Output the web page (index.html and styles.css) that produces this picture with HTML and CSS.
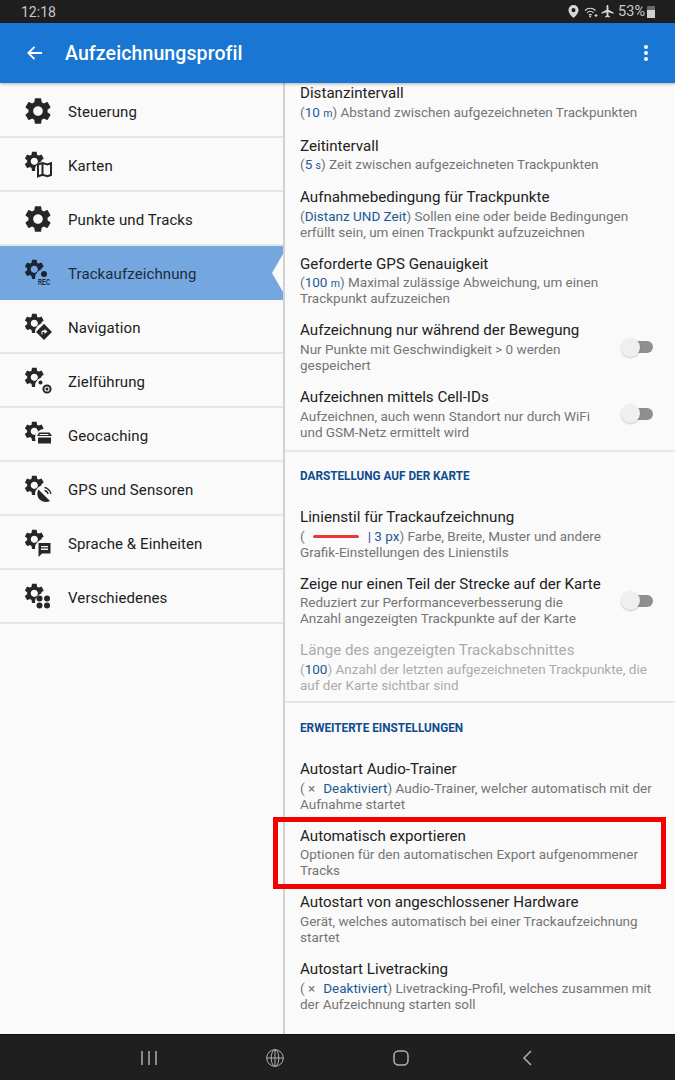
FILE: index.html
```html
<!DOCTYPE html>
<html lang="de">
<head>
  <meta charset="UTF-8" />
  <title>Aufzeichnungsprofil</title>
  <link rel="stylesheet" href="styles.css">
</head>
<body>
  <svg class="defs" xmlns="http://www.w3.org/2000/svg">
    <symbol id="gear" viewBox="0 0 24 24">
      <path d="M19.14 12.94c.04-.3.06-.61.06-.94 0-.32-.02-.64-.07-.94l2.03-1.58c.18-.14.23-.41.12-.61l-1.92-3.32c-.12-.22-.37-.29-.59-.22l-2.39.96c-.5-.38-1.03-.7-1.62-.94l-.36-2.54c-.04-.24-.24-.41-.48-.41h-3.84c-.24 0-.43.17-.47.41l-.36 2.54c-.59.24-1.13.57-1.62.94l-2.39-.96c-.22-.08-.47 0-.59.22L2.74 8.87c-.12.21-.08.47.12.61l2.03 1.58c-.05.3-.09.63-.09.94s.02.64.07.94l-2.03 1.58c-.18.14-.23.41-.12.61l1.92 3.32c.12.22.37.29.59.22l2.39-.96c.5.38 1.03.7 1.62.94l.36 2.54c.05.24.24.41.48.41h3.84c.24 0 .44-.17.47-.41l.36-2.54c.59-.24 1.13-.56 1.62-.94l2.39.96c.22.08.47 0 .59-.22l1.92-3.32c.12-.22.07-.47-.12-.61l-2.01-1.58zM12 15.6c-1.98 0-3.6-1.62-3.6-3.6s1.62-3.6 3.6-3.6 3.6 1.62 3.6 3.6-1.62 3.6-3.6 3.6z"/>
    </symbol>
  </svg>

  <div class="page">
    <div class="status-bar">
      <span class="clock">12:18</span>
      <div class="status-icons">
        <svg class="st-pin" viewBox="0 0 12 14"><path d="M6 0a5.500 5.500 0 0 0-5.500 5.500C.5 9.200 6 14 6 14s5.500-4.800 5.500-8.500A5.500 5.500 0 0 0 6 0zm0 7.700a2.200 2.200 0 1 1 0-4.400 2.200 2.200 0 0 1 0 4.400z"/></svg>
        <svg class="st-wifi" viewBox="0 0 14 12"><path class="st-line" d="M1 4.500c3-3 7.500-3 10.500 0M3 6.800c2-2 4.500-2 6.500 0M5 9c1-.9 1.600-.9 2.500 0"/><circle cx="6.200" cy="10.600" r="1"/><path class="st-line" d="M10.500 9.500h3M12 8v3"/></svg>
        <svg class="st-plane" viewBox="0 0 14 14"><path d="M13.500 9.500V8.200L8 5V1.500C8 .7 7.500 0 7 0S6 .7 6 1.500V5L.5 8.200v1.300L6 7.800v3.500l-1.500 1.100V13.500L7 12.800l2.500.7v-1.100L8 11.300V7.800z"/></svg>
        <span class="battery-pct">53%</span>
        <div class="battery"><div class="battery-fill"></div></div>
      </div>
    </div>

    <header class="app-bar">
      <svg class="back-arrow" viewBox="0 0 16 16"><path d="M15.500 8H2M8 1.800 1.800 8 8 14.200"/></svg>
      <h1 class="app-title">Aufzeichnungsprofil</h1>
      <div class="more-dots"><i></i><i></i><i></i></div>
    </header>

    <div class="main">
      <nav class="side-list">
        <div class="side-row">
          <svg class="side-icon" viewBox="0 0 28 28"><use href="#gear" x="-2" y="-2" width="32" height="32"/></svg>
          <span>Steuerung</span>
        </div>
        <div class="side-row">
          <svg class="side-icon" viewBox="0 0 28 28">
            <use href="#gear" x="-1.700" y="-1.700" width="24" height="24"/>
            <circle class="cut" cx="20" cy="19" r="9"/>
            <path class="glyph-line" d="M14 13.500 18.500 12l5 1.500 3.500-1.300V24l-3.500 1.300-5-1.500-4.500 1.500z"/>
            <path class="glyph-fill" d="M17.500 12h2v12h-2z"/>
          </svg>
          <span>Karten</span>
        </div>
        <div class="side-row">
          <svg class="side-icon" viewBox="0 0 28 28"><use href="#gear" x="-2" y="-2" width="32" height="32"/></svg>
          <span>Punkte und Tracks</span>
        </div>
        <div class="side-row active">
          <svg class="side-icon" viewBox="0 0 28 28">
            <use href="#gear" x="-1.700" y="-1.700" width="24" height="24"/>
            <circle class="cut" cx="20" cy="19" r="9"/>
            <circle cx="20" cy="15" r="3"/>
            <text class="rec-label" x="14" y="26" textLength="12" lengthAdjust="spacingAndGlyphs">REC</text>
          </svg>
          <span>Trackaufzeichnung</span>
        </div>
        <div class="side-row">
          <svg class="side-icon" viewBox="0 0 28 28">
            <use href="#gear" x="-1.700" y="-1.700" width="24" height="24"/>
            <circle class="cut" cx="20" cy="19" r="9"/>
            <path d="M20 10.800 28 19l-8 8-8-8z"/>
            <path class="glyph-cut" d="M17.500 21.500v-3l1-1h2v-1.500l3 2.500-3 2.500V19h-2v2.500z"/>
          </svg>
          <span>Navigation</span>
        </div>
        <div class="side-row">
          <svg class="side-icon" viewBox="0 0 28 28">
            <use href="#gear" x="-1.700" y="-1.700" width="24" height="24"/>
            <circle class="cut" cx="20" cy="19" r="9"/>
            <circle cx="16.500" cy="15.500" r="2"/>
            <circle class="glyph-line" cx="23" cy="22" r="3.600"/>
            <circle cx="23" cy="22" r="1.500"/>
          </svg>
          <span>Zielführung</span>
        </div>
        <div class="side-row">
          <svg class="side-icon" viewBox="0 0 28 28">
            <use href="#gear" x="-1.700" y="-1.700" width="24" height="24"/>
            <circle class="cut" cx="20" cy="17" r="9"/>
            <path d="M15 11.500h10.500l2.500 3.500H13zM14 16.500h13v6H14z"/>
            <path class="glyph-cut" d="M16 13h8l1 1H15.200z"/>
          </svg>
          <span>Geocaching</span>
        </div>
        <div class="side-row">
          <svg class="side-icon" viewBox="0 0 28 28">
            <use href="#gear" x="-1.700" y="-1.700" width="24" height="24"/>
            <circle class="cut" cx="20" cy="19" r="9"/>
            <path d="M14.500 14.500 26 26c-3.300 1.700-7.700 1.200-10.300-1.500-2.700-2.700-3-7-1.200-10z"/>
            <path class="glyph-thin" d="M20.500 12.500c3 .3 6 3.300 6.500 6.500M20.500 15.500c1.700.3 3.200 1.800 3.500 3.500"/>
          </svg>
          <span>GPS und Sensoren</span>
        </div>
        <div class="side-row">
          <svg class="side-icon" viewBox="0 0 28 28">
            <use href="#gear" x="-1.700" y="-1.700" width="24" height="24"/>
            <circle class="cut" cx="20" cy="19" r="9"/>
            <path d="M14.500 14h12v10.500H18l-3.500 3.500z"/>
            <path class="glyph-cut" d="M17 17h7v1.300h-7zM17 19.600h7v1.300h-7z"/>
          </svg>
          <span>Sprache &amp; Einheiten</span>
        </div>
        <div class="side-row">
          <svg class="side-icon" viewBox="0 0 28 28">
            <use href="#gear" x="-1.700" y="-1.700" width="24" height="24"/>
            <circle class="cut" cx="20" cy="19" r="9"/>
            <circle cx="15.500" cy="15.500" r="3"/><circle cx="23" cy="15.500" r="3"/>
            <circle cx="15.500" cy="22.500" r="3"/><circle cx="23" cy="22.500" r="3"/>
          </svg>
          <span>Verschiedenes</span>
        </div>
      </nav>

      <section class="pref-pane">
        <div class="pref-group first">
          <div class="pref">
            <div class="pref-title">Distanzintervall</div>
            <div class="pref-sub">(<b>10 <small>m</small></b>) Abstand zwischen aufgezeichneten Trackpunkten</div>
          </div>
          <div class="pref">
            <div class="pref-title">Zeitintervall</div>
            <div class="pref-sub">(<b>5 <small>s</small></b>) Zeit zwischen aufgezeichneten Trackpunkten</div>
          </div>
          <div class="pref">
            <div class="pref-title">Aufnahmebedingung für Trackpunkte</div>
            <div class="pref-sub">(<b>Distanz UND Zeit</b>) Sollen eine oder beide Bedingungen erfüllt sein, um einen Trackpunkt aufzuzeichnen</div>
          </div>
          <div class="pref">
            <div class="pref-title">Geforderte GPS Genauigkeit</div>
            <div class="pref-sub">(<b>100 <small>m</small></b>) Maximal zulässige Abweichung, um einen Trackpunkt aufzuzeichen</div>
          </div>
          <div class="pref with-toggle">
            <div class="pref-text">
              <div class="pref-title">Aufzeichnung nur während der Bewegung</div>
              <div class="pref-sub">Nur Punkte mit Geschwindigkeit &gt; 0 werden gespeichert</div>
            </div>
            <div class="toggle"></div>
          </div>
          <div class="pref with-toggle">
            <div class="pref-text">
              <div class="pref-title">Aufzeichnen mittels Cell-IDs</div>
              <div class="pref-sub">Aufzeichnen, auch wenn Standort nur durch WiFi und GSM-Netz ermittelt wird</div>
            </div>
            <div class="toggle"></div>
          </div>
        </div>

        <div class="pref-group">
          <h2 class="group-head"><span>DARSTELLUNG AUF DER KARTE</span></h2>
          <div class="pref">
            <div class="pref-title">Linienstil für Trackaufzeichnung</div>
            <div class="pref-sub">(<span class="line-sample"></span><b>| 3 px</b>) Farbe, Breite, Muster und andere <span class="nobreak">Grafik-Einstellungen</span> des Linienstils</div>
          </div>
          <div class="pref with-toggle">
            <div class="pref-text">
              <div class="pref-title">Zeige nur einen Teil der Strecke auf der Karte</div>
              <div class="pref-sub">Reduziert zur Performanceverbesserung die Anzahl angezeigten Trackpunkte auf der Karte</div>
            </div>
            <div class="toggle"></div>
          </div>
          <div class="pref disabled">
            <div class="pref-title">Länge des angezeigten Trackabschnittes</div>
            <div class="pref-sub">(<b>100</b>) Anzahl der letzten aufgezeichneten Trackpunkte, die auf der Karte sichtbar sind</div>
          </div>
        </div>

        <div class="pref-group last">
          <h2 class="group-head"><span>ERWEITERTE EINSTELLUNGEN</span></h2>
          <div class="pref">
            <div class="pref-title">Autostart Audio-Trainer</div>
            <div class="pref-sub">( <span class="off-x">×</span><b>Deaktiviert</b>) Audio-Trainer, welcher automatisch mit der Aufnahme startet</div>
          </div>
          <div class="pref">
            <div class="pref-title">Automatisch exportieren</div>
            <div class="pref-sub">Optionen für den automatischen Export aufgenommener Tracks</div>
          </div>
          <div class="pref">
            <div class="pref-title">Autostart von angeschlossener Hardware</div>
            <div class="pref-sub">Gerät, welches automatisch bei einer Trackaufzeichnung startet</div>
          </div>
          <div class="pref">
            <div class="pref-title">Autostart Livetracking</div>
            <div class="pref-sub">( <span class="off-x">×</span><b>Deaktiviert</b>) Livetracking-Profil, welches zusammen mit der Aufzeichnung starten soll</div>
          </div>
        </div>
      </section>
    </div>

    <div class="nav-bar">
      <svg class="nav-icon" viewBox="0 0 18 18"><path d="M2 2v14M9 2v14M16 2v14"/></svg>
      <svg class="nav-icon thin" viewBox="0 0 18 18"><circle cx="9" cy="9" r="8.300"/><ellipse cx="9" cy="9" rx="3.800" ry="8.300"/><path d="M9 .7v16.600M.7 9h16.600"/></svg>
      <svg class="nav-icon" viewBox="0 0 18 18"><rect x="2" y="2" width="14" height="14" rx="4.500"/></svg>
      <svg class="nav-icon" viewBox="0 0 18 18"><path d="M13 2 6 9l7 7"/></svg>
    </div>

    <div class="red-box"></div>
  </div>
</body>
</html>
```

FILE: styles.css
```css
:root {
  --bg: #fafafa;
  --dark: #212121;
  --bar: #1f1f1f;
  --blue: #1976d2;
  --active: #74a7e0;
  --link: #1c5a94;
  --sub: #757575;
  --line: #e6e6e6;
}

* {
  margin: 0;
  padding: 0;
  box-sizing: border-box;
}

body {
  font-family: Roboto, sans-serif;
  background-color: var(--bg);
}

.defs {
  display: none;
}

.page {
  position: relative;
  width: 675px;
  height: 1080px;
  display: flex;
  flex-direction: column;
  overflow: hidden;
}

/* status bar */
.status-bar {
  height: 23px;
  flex: none;
  background-color: var(--bar);
  color: #c9c9c9;
  display: flex;
  align-items: center;
  justify-content: space-between;
  padding: 0 20px 0 21px;
  font-size: 14px;
}

.status-icons {
  display: flex;
  align-items: center;
}

.status-icons svg {
  fill: #d8d8d8;
  display: block;
}

.st-pin {
  width: 11px;
  height: 13px;
  margin-right: 5px;
}

.st-wifi {
  width: 14px;
  height: 12px;
  margin-right: 3px;
}

.st-wifi .st-line {
  fill: none;
  stroke: #d8d8d8;
  stroke-width: 1.1;
}

.st-plane {
  width: 13px;
  height: 13px;
  margin-right: 4px;
}

.battery-pct {
  font-size: 14.500px;
  margin-right: 2px;
}

.battery {
  width: 8px;
  height: 12px;
  background-color: #6a6a6a;
  border-radius: 1px;
  display: flex;
  align-items: flex-end;
}

.battery-fill {
  width: 100%;
  height: 8px;
  background-color: #cfcfcf;
}

/* app bar */
.app-bar {
  height: 60px;
  flex: none;
  background-color: var(--blue);
  color: #fff;
  display: flex;
  align-items: center;
  padding: 0 27px 0 26px;
  box-shadow: 0 1px 3px rgba(0, 0, 0, 0.3);
  position: relative;
  z-index: 2;
}

.back-arrow {
  width: 17px;
  height: 16px;
  fill: none;
  stroke: #fff;
  stroke-width: 1.800;
}

.app-title {
  flex: 1;
  margin-left: 22px;
  font-size: 19.500px;
  font-weight: 500;
  letter-spacing: 0.1px;
}

.more-dots {
  display: flex;
  flex-direction: column;
  gap: 2px;
}

.more-dots i {
  width: 4px;
  height: 4px;
  border-radius: 50%;
  background-color: #fff;
}

/* two panes */
.main {
  flex: 1;
  min-height: 0;
  display: flex;
}

.side-list {
  width: 285px;
  flex: none;
  padding-top: 1px;
  border-right: 2px solid #d2d2d2;
}

.side-row {
  position: relative;
  height: 54px;
  display: flex;
  align-items: center;
  padding-left: 24px;
  padding-top: 2px;
  gap: 16px;
  font-size: 15px;
  color: var(--dark);
  border-bottom: 2px solid var(--line);
}

.side-row span {
  letter-spacing: 0.1px;
  margin-top: 2px;
}

.side-row.active {
  background-color: var(--active);
  border-bottom-color: var(--active);
  color: #1d2b3a;
}

.side-row.active::after {
  content: "";
  position: absolute;
  right: 0;
  top: 8px;
  border-style: solid;
  border-width: 19px 11px 19px 0;
  border-color: transparent var(--bg) transparent transparent;
}

.side-icon {
  width: 28px;
  height: 28px;
  flex: none;
  fill: #262626;
  overflow: visible;
}

.active .side-icon {
  fill: #1b2433;
}

.cut {
  fill: var(--bg);
}

.active .cut {
  fill: var(--active);
}

.glyph-cut {
  fill: var(--bg);
}

.glyph-line {
  fill: none;
  stroke: #262626;
  stroke-width: 2;
}

.glyph-thin {
  fill: none;
  stroke: #262626;
  stroke-width: 1.400;
}

.glyph-fill {
  fill: #262626;
}

.rec-label {
  font-family: "Liberation Sans", sans-serif;
  font-size: 9px;
  font-weight: 700;
}

/* settings */
.pref-pane {
  flex: 1;
  min-width: 0;
  overflow: hidden;
  background-color: var(--bg);
}

.pref-group {
  padding-bottom: 1px;
  border-bottom: 2px solid var(--line);
}

.pref-group.first {
  margin-top: -7.500px;
  padding-bottom: 2.400px;
}

.pref-group.last {
  border-bottom: 0;
}

.group-head {
  height: 49px;
  display: flex;
  align-items: center;
  padding: 0 0 2px 15px;
  font-size: 13.500px;
  font-weight: 700;
  color: #0f4c8f;
}

.group-head span {
  display: inline-block;
  white-space: nowrap;
  transform: scaleX(0.87);
  transform-origin: left center;
}

.pref {
  min-height: 52.500px;
  padding: 7.580px 20px 7.580px 15px;
  display: flex;
  flex-direction: column;
  justify-content: center;
}

.pref.with-toggle {
  flex-direction: row;
  justify-content: space-between;
  align-items: center;
}

.pref-text {
  width: 306px;
}

.pref-title {
  font-size: 15.150px;
  line-height: 19px;
  color: var(--dark);
  margin-bottom: 0.500px;
  white-space: nowrap;
}

.pref-sub {
  font-size: 13.500px;
  line-height: 16px;
  color: var(--sub);
}

.pref-sub b {
  font-weight: 400;
  color: var(--link);
}

.pref-sub small {
  font-size: 10.500px;
  line-height: 0;
}

.nobreak {
  white-space: nowrap;
}

.pref.disabled .pref-title,
.pref.disabled .pref-sub {
  color: #ababab;
}

.pref.disabled .pref-sub b {
  color: var(--link);
}

.off-x {
  margin: 0 8px 0 0;
}

.line-sample {
  display: inline-block;
  width: 46px;
  height: 3px;
  border-radius: 2px;
  margin: 0 9px 0 8px;
  vertical-align: 3px;
  background-color: #e53935;
}

.toggle {
  position: relative;
  width: 32px;
  height: 12px;
  flex: none;
  margin-right: 2px;
  border-radius: 6px;
  background: linear-gradient(90deg, transparent 20%, #8f8f8f 20%);
}

.toggle::before {
  content: "";
  position: absolute;
  left: 0;
  top: -3.500px;
  width: 19px;
  height: 19px;
  border-radius: 50%;
  background-color: #efefef;
  box-shadow: 0 1px 2px rgba(0, 0, 0, 0.2);
}

/* bottom nav */
.nav-bar {
  height: 46px;
  flex: none;
  background-color: var(--bar);
  display: flex;
  align-items: center;
  justify-content: space-between;
  padding: 0 139px 0 140px;
  border-top: 1px solid #111;
}

.nav-icon {
  width: 18px;
  height: 18px;
  fill: none;
  stroke: #b0b0b0;
  stroke-width: 1.500;
}

.nav-icon.thin {
  stroke-width: 1;
}

/* annotation over the screenshot */
.red-box {
  position: absolute;
  left: 273px;
  top: 817px;
  width: 393px;
  height: 72px;
  border: 5px solid #f40000;
}
```
